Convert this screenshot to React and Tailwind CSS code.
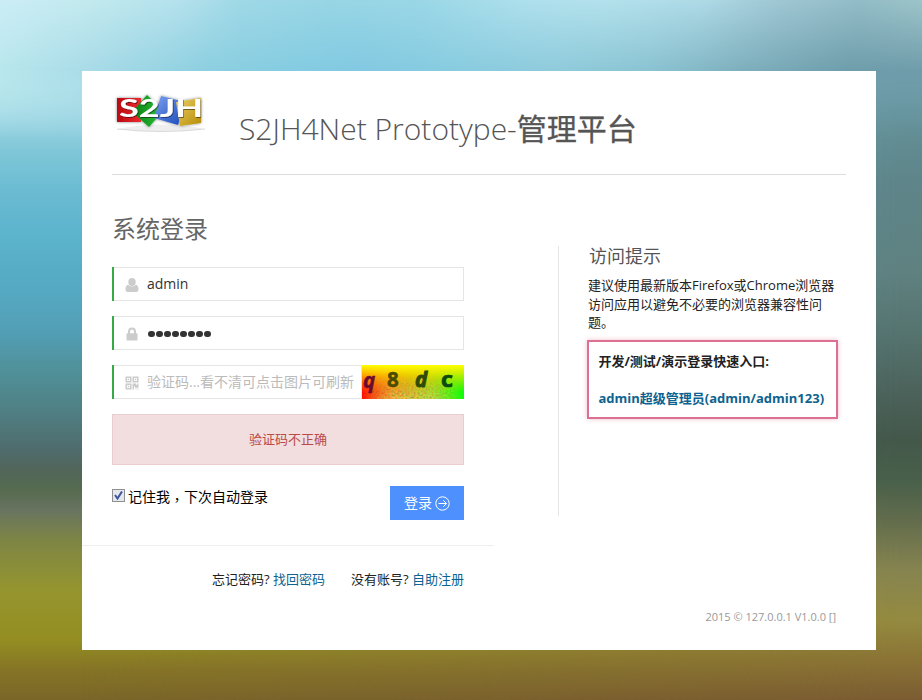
function Backdrop() {
  return (
    <>
      <div className="absolute inset-0 bg-[linear-gradient(180deg,#ccedf6_0px,#bde8ec_45px,#b5e4ea_85px,#a0d7e5_115px,#80c7d8_150px,#6bbcd2_190px,#5db4cd_230px,#55a9c2_290px,#529fb6_330px,#50919a_370px,#4f8084_410px,#4f6c6c_450px,#52665a_470px,#566b50_490px,#687460_510px,#7d8545_540px,#95952f_590px,#948e22_640px,#857426_670px,#7a6628_700px)]" />
      <div className="absolute inset-0 bg-[linear-gradient(180deg,#9cc6cf_0px,#86b3be_25px,#709daa_70px,#649299_110px,#5e858a_180px,#5f8180_270px,#567470_330px,#4a6058_400px,#44584a_440px,#48604a_480px,#626c4c_520px,#868450_570px,#948a40_620px,#8a7335_660px,#7b5c32_700px)] [mask-image:linear-gradient(90deg,transparent_80px,black_900px)]" />
      <div className="absolute inset-x-0 top-0 h-[150px] bg-[linear-gradient(90deg,#b8e7ec_0px,#a8dbe8_90px,#8ccfe0_210px,#84cce2_300px,#82c9e2_360px,#88cce0_450px,#8fcbdb_560px,#8ac3d2_650px,#7eafbd_740px,#6e9dab_850px,#6f9caa_922px)] [mask-image:linear-gradient(180deg,black_70px,transparent_140px)]" />
      <div className="absolute inset-x-0 top-0 h-[75px] bg-[linear-gradient(90deg,#ccedf6_0px,#c2e9ee_90px,#b4e1ec_180px,#9fd8e6_240px,#97d5e4_330px,#9ad7e6_420px,#addfec_520px,#b3e1ec_600px,#aedae6_700px,#9fc6d3_780px,#92bcc6_860px,#9cc4c9_922px)] [mask-image:linear-gradient(180deg,black_0px,transparent_72px)]" />
    </>
  );
}

function Logo() {
  return (
    <svg width="96" height="44" viewBox="0 0 96 44" className="overflow-visible">
      <defs>
        <linearGradient id="r" x2="1"><stop stopColor="#b80812" /><stop offset="1" stopColor="#ee2b30" /></linearGradient>
        <linearGradient id="g" x2="1"><stop stopColor="#087d14" /><stop offset="1" stopColor="#2cc538" /></linearGradient>
        <linearGradient id="b" x2="1" y2="1"><stop stopColor="#7ba0f0" /><stop offset="1" stopColor="#1748b8" /></linearGradient>
        <linearGradient id="y" x2="1" y2="1"><stop stopColor="#e9d067" /><stop offset="1" stopColor="#b78c05" /></linearGradient>
        <filter id="s" x="-20%" y="-20%" width="140%" height="150%"><feDropShadow dx="0" dy="0" stdDeviation="1.8" floodOpacity=".5" /></filter>
        <filter id="t" x="-20%" y="-20%" width="140%" height="150%"><feDropShadow dx=".8" dy=".8" stdDeviation=".7" floodOpacity=".6" /></filter>
      </defs>
      <path d="M5 39q44-9 88 0-44 5-88 0" fill="#eee" />
      <path d="M5 39q44 5 88 0" fill="none" stroke="#d0d0d0" strokeWidth=".8" />
      <g filter="url(#s)">
        <path d="M5 8h24v24H5z" fill="url(#r)" />
        <path d="M35 5l16 16-14 16-17-15z" fill="url(#g)" />
        <path d="M49 6l24 6-7 23-24-7z" fill="url(#b)" />
        <path d="M64 12l25-4v25l-21 3z" fill="url(#y)" />
      </g>
      <text x="7" y="27" textLength="84" lengthAdjust="spacingAndGlyphs" fill="white" fontFamily="Lato, sans-serif" fontSize="24" fontWeight="700" filter="url(#t)">S2JH</text>
    </svg>
  );
}

function UserIcon() {
  return (
    <svg width="14" height="14" viewBox="0 0 14 14" fill="#ccc">
      <ellipse cx="7" cy="4" rx="3.7" ry="4" />
      <path d="M3.3 6.8C1.2 7 .5 9 .5 11.500c0 1.600.9 2.500 2.300 2.500h8.400c1.400 0 2.300-.9 2.300-2.500 0-2.500-.7-4.500-2.800-4.700-1.800 2.200-5.600 2.200-7.400 0z" />
    </svg>
  );
}

function LockIcon() {
  return (
    <svg width="14" height="14" viewBox="0 0 14 14">
      <rect x="1.500" y="6.300" width="11" height="7.200" rx=".8" fill="#ccc" />
      <path d="M4 7V4.500a3 3 0 0 1 6 0V7" fill="none" stroke="#ccc" strokeWidth="2" />
    </svg>
  );
}

function QrIcon() {
  return (
    <svg width="14" height="14" viewBox="0 0 14 14" fill="#ccc">
      <path fillRule="evenodd" d="M.5.5h6v6h-6zM2 2v3h3V2zM7.500.5h6v6h-6zM9 2v3h3V2zM.5 7.500h6v6h-6zM2 9v3h3V9z" />
      <path d="M2.700 2.700h1.600v1.600H2.700zM9.700 2.700h1.600v1.600H9.700zM2.700 9.700h1.600v1.600H2.700zM7.500 7.500h3.500v1.200h1.200V7.500h1.300v4.300H10v-1.300H9v3H7.500zM10.500 12.500h1v1h-1zM12.500 12.500h1v1h-1z" />
    </svg>
  );
}

function Captcha() {
  return (
    <svg width="102" height="34" viewBox="0 0 102 34" className="shrink-0">
      <defs>
        <linearGradient id="cx" x2="1"><stop stopColor="#ff1000" /><stop offset=".3" stopColor="#e87000" /><stop offset=".6" stopColor="#a0b800" /><stop offset=".85" stopColor="#38f000" /><stop offset="1" stopColor="#08ff08" /></linearGradient>
        <linearGradient id="cy" x2="0" y2="1"><stop stopColor="#ffff00" /><stop offset=".2" stopColor="#fff000" stopOpacity=".8" /><stop offset=".8" stopColor="#ffd000" stopOpacity="0" /></linearGradient>
        <filter id="noise"><feTurbulence type="fractalNoise" baseFrequency=".5" numOctaves="2" seed="4" /><feColorMatrix values="2 0 0 0 -.2  0 1.800 0 0 -.2  0 0 .3 0 0  0 0 0 0 1" /></filter>
        <linearGradient id="fade" x2="0" y2="1"><stop offset=".3" stopColor="black" /><stop offset="1" stopColor="white" /></linearGradient>
        <linearGradient id="sides" x2="1"><stop stopColor="black" /><stop offset=".3" stopColor="black" stopOpacity="0" /><stop offset=".7" stopColor="black" stopOpacity="0" /><stop offset="1" stopColor="black" /></linearGradient>
        <mask id="nm"><rect width="102" height="34" fill="url(#fade)" /><rect width="102" height="34" fill="url(#sides)" /></mask>
      </defs>
      <rect width="102" height="34" fill="url(#cx)" />
      <rect width="102" height="34" fill="url(#cy)" />
      <g mask="url(#nm)"><rect width="102" height="34" filter="url(#noise)" opacity=".6" /></g>
      <g fontFamily="Open Sans, sans-serif" fontWeight="700" fontSize="20.500">
        <text x="1" y="23" fill="#6b0a30" stroke="#6b0a30" strokeWidth=".5" fontStyle="italic">q</text>
        <text x="25" y="22" fill="#4a4a00" stroke="#4a4a00" strokeWidth=".5">8</text>
        <text x="53" y="22" fill="#2e4a08" stroke="#2e4a08" strokeWidth=".9" fontStyle="italic">d</text>
        <text x="79" y="22" fill="#0c4a10" stroke="#0c4a10" strokeWidth=".7" textLength="12" lengthAdjust="spacingAndGlyphs">c</text>
      </g>
    </svg>
  );
}

function Field({ icon, children, extra }) {
  return (
    <div className="flex h-[34px] w-[352px] border-l-2 border-[#35aa47]">
      <div className="flex min-w-0 flex-1 items-center border border-l-0 border-[#e5e5e5] pb-px pl-[11px]">
        <span className="mt-[3px] shrink-0">{icon}</span>
        {children}
      </div>
      {extra}
    </div>
  );
}

export default function App() {
  return (
    <div className="relative h-[700px] w-[922px] overflow-hidden pt-[71px] pl-[82px] font-['Open_Sans','Noto_Sans_CJK_SC',sans-serif] text-[13px] text-[#222]">
      <Backdrop />
      <main className="relative flex h-[579px] w-[794px] flex-col bg-white">
        <header className="mx-[30px] flex h-[104px] w-[734px] shrink-0 border-b border-[#ddd]">
          <div className="mt-[19px] w-[127px]"><Logo /></div>
          <h1 className="mt-[37px] text-[30px] leading-[42px] font-light whitespace-nowrap text-[#555]">
            S2JH4Net Prototype-<span className="font-normal [-webkit-text-stroke:0.3px_#555]">管理平台</span>
          </h1>
        </header>

        <div className="flex">
          <section className="w-[412px]">
            <div className="h-[371px] border-b border-[#eee] pl-[30px]">
              <h2 className="pt-[36px] text-[24px] leading-[36px] text-[#666]">系统登录</h2>
              <div className="mt-[20px] flex flex-col gap-[15px] text-[14px]">
                <Field icon={<UserIcon />}><span className="ml-2 text-[#333]">admin</span></Field>
                <Field icon={<LockIcon />}>
                  <span className="ml-[9px] flex gap-[1.5px] pt-[3px]">
                    {Array.from({ length: 8 }, (_, i) => <i key={i} className="size-[6.5px] rounded-full bg-[#333]" />)}
                  </span>
                </Field>
                <Field icon={<QrIcon />} extra={<Captcha />}>
                  <span className="ml-2 whitespace-nowrap text-[#bbb]">验证码...看不清可点击图片可刷新</span>
                </Field>
              </div>
              <div className="mt-[15px] flex h-[51px] w-[352px] items-center justify-center border border-[#ebccd1] bg-[#f2dede] text-[#b94a48]">验证码不正确</div>
              <div className="mt-[21px] flex w-[352px] justify-between">
                <label className="flex h-[20px] items-center text-[14px] text-black">
                  <span className="mr-[3px] mb-px flex size-[13px] items-center justify-center border border-[#8e8f8f] bg-[#e4e7ee]">
                    <svg width="9" height="9" viewBox="0 0 9 9" fill="none" stroke="#3f549c" strokeWidth="2"><path d="M1 4l2.500 3.500L8 .5" /></svg>
                  </span>
                  <span>记住我<span className="relative top-[3px] font-['Noto_Sans_CJK_TC',sans-serif]" lang="zh-TW">，</span>下次自动登录</span>
                </label>
                <button className="flex h-[34px] w-[74px] items-center justify-center gap-[3px] bg-[#4d90fe] text-[14px] text-white">
                  <span className="pb-[2px]">登录</span>
                  <svg width="15" height="15" viewBox="0 0 15 15" fill="none" stroke="white" strokeWidth="1"><circle cx="7.500" cy="7.500" r="6.700" /><path d="M3.500 7.500h8M8.300 4.300l3.200 3.200-3.200 3.200" /></svg>
                </button>
              </div>
            </div>
            <p className="flex w-[382px] justify-end gap-[26px] pt-[23px] leading-[20px]">
              <span>忘记密码? <a className="text-[#0d638f]">找回密码</a></span>
              <span>没有账号? <a className="text-[#0d638f]">自助注册</a></span>
            </p>
          </section>

          <aside className="mt-[71px] ml-[64px] h-[270px] w-[280px] border-l border-[#e5e5e5] pl-[28px]">
            <h3 className="ml-[2px] h-[20px] text-[18px] leading-[21px] text-[#555]">访问提示</h3>
            <p className="mt-[10px] ml-px w-[249px] leading-[18.500px]">建议使用最新版本Firefox或Chrome浏览器访问应用以避免不必要的浏览器兼容性问题。</p>
            <div className="mt-[8px] flex h-[79px] w-[251px] flex-col gap-[17px] border-2 border-[#db7093] pt-[9px] pl-[9.5px] leading-[20px] font-bold whitespace-nowrap shadow-[0_0_5px_#f0c0cf]">
              <p>开发/测试/演示登录快速入口:</p>
              <a className="text-[#0d638f]">admin超级管理员(admin/admin123)</a>
            </div>
          </aside>
        </div>
        <footer className="mt-auto pr-[40px] pb-[24px] text-right text-[11px] leading-[18px] text-[#999]">2015 © 127.0.0.1 V1.0.0 []</footer>
      </main>
    </div>
  );
}
